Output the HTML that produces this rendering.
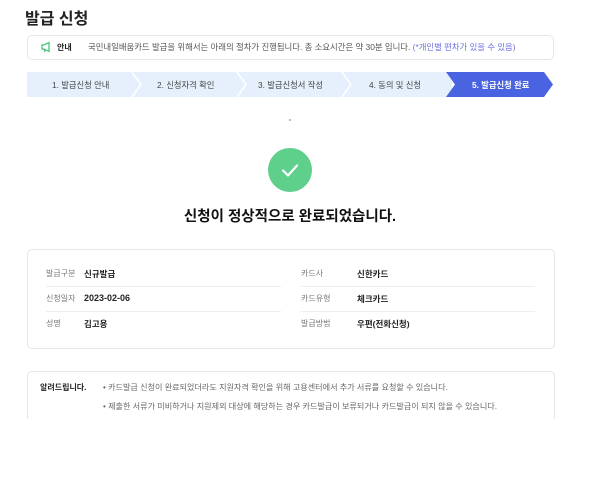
<!DOCTYPE html>
<html><head><meta charset="utf-8"><style>
*{margin:0;padding:0;box-sizing:border-box}
body{width:600px;height:485px;background:#fff;font-family:"Liberation Sans","Noto Sans CJK KR",sans-serif;color:#222;position:relative;overflow:hidden}
.a{position:absolute;white-space:nowrap}
.box{position:absolute;border:1px solid #e6e6e6;border-radius:5px;background:#fff}
.lab{font-size:8px;color:#777}
.val{font-size:8.5px;color:#222;font-weight:bold}
.hr{position:absolute;height:1px;background:#eee}
</style></head><body>
<div class="a" style="left:25px;top:5px;font-size:16px;font-weight:bold;color:#222">발급 신청</div>
<div class="box" style="left:27px;top:35px;width:527px;height:25px"></div>
<svg class="a" style="left:40px;top:41px" width="12" height="12" viewBox="0 0 12 12"><path d="M2 4h2l5-2.5v9L4 8H2z M4 8l1 3" fill="none" stroke="#4cc47c" stroke-width="1.3"/></svg>
<div class="a" style="left:57px;top:42px;font-size:8px;font-weight:bold">안내</div>
<div class="a" style="left:88px;top:41px;font-size:8.4px;color:#555">국민내일배움카드 발급을 위해서는 아래의 절차가 진행됩니다. 총 소요시간은 약 30분 입니다. <span style="color:#6b72e0">(*개인별 편차가 있을 수 있음)</span></div>
<svg class="a" style="left:27px;top:72px" width="530" height="25">
<rect x="0" y="0" width="425" height="25" fill="#e5f0fc"/>
<path d="M105 0l9 12.5-9 12.5M210 0l9 12.5-9 12.5M315 0l9 12.5-9 12.5" fill="none" stroke="#fff" stroke-width="1.5"/>
<path d="M419 0h98l9 12.5-9 12.5h-98l9-12.5z" fill="#4a63e0"/>
</svg>
<div class="a" style="left:52px;top:79px;font-size:8.3px;color:#444">1. 발급신청 안내</div>
<div class="a" style="left:157px;top:79px;font-size:8.3px;color:#444">2. 신청자격 확인</div>
<div class="a" style="left:258px;top:79px;font-size:8.3px;color:#444">3. 발급신청서 작성</div>
<div class="a" style="left:369px;top:79px;font-size:8.3px;color:#444">4. 동의 및 신청</div>
<div class="a" style="left:472px;top:79px;font-size:8.3px;color:#fff;font-weight:bold">5. 발급신청 완료</div>
<div class="a" style="left:289px;top:119px;width:2px;height:2px;background:#bbb"></div>
<svg class="a" style="left:268px;top:148px" width="44" height="44"><circle cx="22" cy="22" r="22" fill="#5fcf8c"/><path d="M15 22.5l5 5 9-10" fill="none" stroke="#fff" stroke-width="2.2" stroke-linecap="round" stroke-linejoin="round"/></svg>
<div class="a" style="left:0;width:580px;text-align:center;top:205px;font-size:14.5px;font-weight:bold;color:#111">신청이 정상적으로 완료되었습니다.</div>
<div class="box" style="left:27px;top:249px;width:528px;height:100px"></div>
<div class="a lab" style="left:46px;top:268px">발급구분</div><div class="a val" style="left:84px;top:268px">신규발급</div>
<div class="a lab" style="left:46px;top:293px">신청일자</div><div class="a val" style="left:84px;top:293px;font-size:9px">2023-02-06</div>
<div class="a lab" style="left:46px;top:318px">성명</div><div class="a val" style="left:84px;top:318px">김고용</div>
<div class="a lab" style="left:301px;top:268px">카드사</div><div class="a val" style="left:357px;top:268px">신한카드</div>
<div class="a lab" style="left:301px;top:293px">카드유형</div><div class="a val" style="left:357px;top:293px">체크카드</div>
<div class="a lab" style="left:301px;top:318px">발급방법</div><div class="a val" style="left:357px;top:318px">우편(전화신청)</div>
<div class="hr" style="left:46px;top:286px;width:235px"></div><div class="hr" style="left:46px;top:311px;width:235px"></div>
<div class="hr" style="left:301px;top:286px;width:234px"></div><div class="hr" style="left:301px;top:311px;width:234px"></div>
<div class="box" style="left:27px;top:371px;width:528px;height:60px"></div>
<div class="a" style="left:0;top:419px;width:600px;height:66px;background:#fff"></div>
<div class="a" style="left:40px;top:382px;font-size:8px;font-weight:bold">알려드립니다.</div>
<div class="a" style="left:103px;top:382px;font-size:8.1px;color:#666">• 카드발급 신청이 완료되었더라도 지원자격 확인을 위해 고용센터에서 추가 서류를 요청할 수 있습니다.</div>
<div class="a" style="left:103px;top:401px;font-size:8.1px;color:#666">• 제출한 서류가 미비하거나 지원제외 대상에 해당하는 경우 카드발급이 보류되거나 카드발급이 되지 않을 수 있습니다.</div>
</body></html>
